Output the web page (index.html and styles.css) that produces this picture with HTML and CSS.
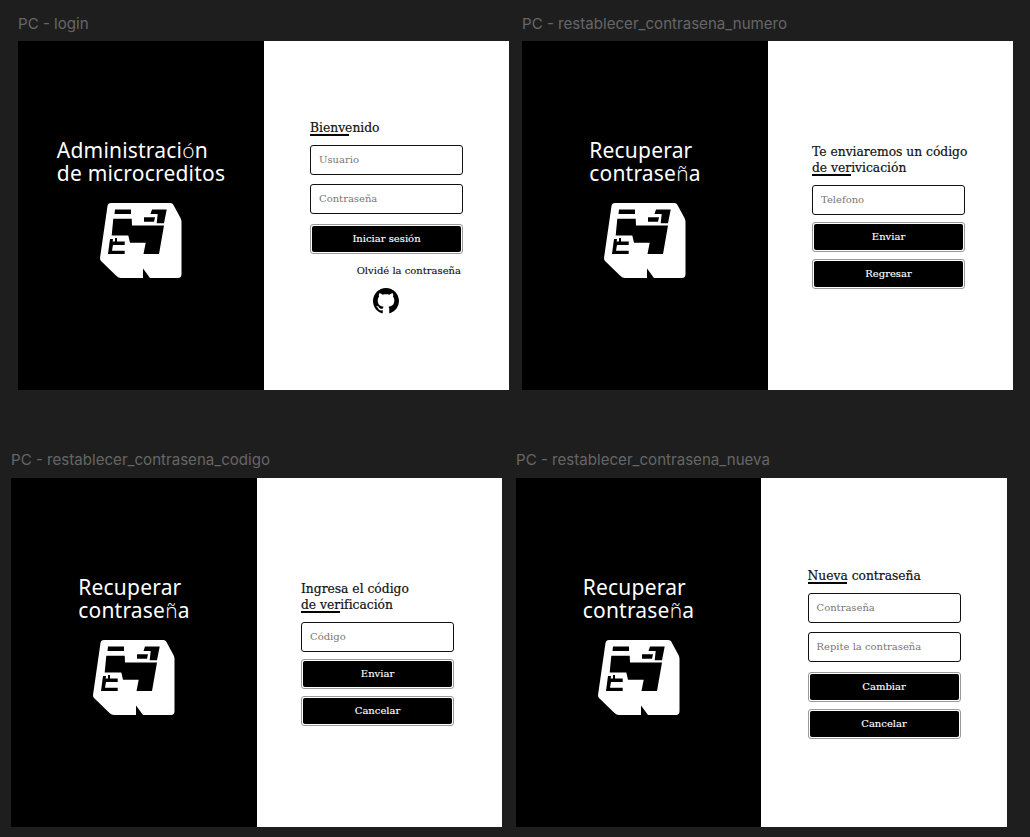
FILE: index.html
```html
<!DOCTYPE html>
<html lang="es">
<head>
<meta charset="utf-8">
<title>PC frames</title>
<link rel="stylesheet" href="styles.css">
</head>
<body>
<svg class="defs" width="0" height="0" aria-hidden="true">
  <symbol id="logo" viewBox="0 0 82 76">
    <path fill-rule="evenodd" fill="#fff" d="M11 0H70Q73 0 74 3L80.500 15Q81.500 17 81.500 19V71Q81.500 75 78 75H50L43 65.500V75H21Q18.500 75 16.500 73L1 58Q0 57 0 55L7.500 3Q8 0 11 0Z
    M15 6.500L14.500 11H31V6.500Z
    M52 6.500H66.700L64 20.300H56.700L57.700 11H50.500Z
    M44 14.300H55L54 18.700H44Z
    M13.300 15.700H31.700L32 22.500H64L59 51H43.500L45.700 39.700H30L28.300 32.500H11.700Z
    M10 36H13L12.700 38.500H15V35H17V38.500H24.700V42H13L12 47.700H24.700V51H8Z"/>
  </symbol>
</svg>

<article class="frame frame-login">
  <p class="frame-label">PC - login</p>
  <div class="board">
    <section class="brand">
      <h1 class="brand-title">Administraci<span class="alt">ó</span>n<br>de microcreditos</h1>
      <svg class="logo"><use href="#logo"/></svg>
    </section>
    <section class="panel">
      <form class="form">
        <h2 class="title"><span class="rule">Bienvenido</span></h2>
        <div class="field">Usuario</div>
        <div class="field">Contraseña</div>
        <div class="btn"><span>Iniciar sesión</span></div>
        <a class="link">Olvidé la contraseña</a>
        <svg class="github" viewBox="0 0 16 16"><path fill="#000" d="M8 0C3.58 0 0 3.58 0 8c0 3.54 2.29 6.53 5.47 7.59.4.07.55-.17.55-.38 0-.19-.01-.82-.01-1.49-2.01.37-2.53-.49-2.69-.94-.09-.23-.48-.94-.82-1.13-.28-.15-.68-.52-.01-.53.63-.01 1.08.58 1.23.82.72 1.21 1.87.87 2.33.66.07-.52.28-.87.51-1.07-1.78-.2-3.64-.89-3.64-3.95 0-.87.31-1.59.82-2.15-.08-.2-.36-1.02.08-2.12 0 0 .67-.21 2.2.82.64-.18 1.32-.27 2-.27s1.36.09 2 .27c1.53-1.04 2.2-.82 2.2-.82.44 1.1.16 1.92.08 2.12.51.56.82 1.27.82 2.15 0 3.07-1.87 3.75-3.65 3.95.29.25.54.73.54 1.48 0 1.07-.01 1.93-.01 2.2 0 .21.15.46.55.38A8.01 8.01 0 0 0 16 8c0-4.42-3.58-8-8-8z"/></svg>
      </form>
    </section>
  </div>
</article>

<article class="frame frame-numero">
  <p class="frame-label">PC - restablecer_contrasena_numero</p>
  <div class="board">
    <section class="brand">
      <h1 class="brand-title">Recuperar<br>contrase<span class="alt">ñ</span>a</h1>
      <svg class="logo"><use href="#logo"/></svg>
    </section>
    <section class="panel panel-left">
      <form class="form">
        <h2 class="title">Te enviaremos un código<br><span class="rule">de verivicación</span></h2>
        <div class="field">Telefono</div>
        <div class="btn"><span>Enviar</span></div>
        <div class="btn"><span>Regresar</span></div>
      </form>
    </section>
  </div>
</article>

<article class="frame frame-codigo">
  <p class="frame-label">PC - restablecer_contrasena_codigo</p>
  <div class="board">
    <section class="brand">
      <h1 class="brand-title">Recuperar<br>contrase<span class="alt">ñ</span>a</h1>
      <svg class="logo"><use href="#logo"/></svg>
    </section>
    <section class="panel panel-left">
      <form class="form">
        <h2 class="title">Ingresa el código<br><span class="rule">de verificación</span></h2>
        <div class="field">Código</div>
        <div class="btn"><span>Enviar</span></div>
        <div class="btn"><span>Cancelar</span></div>
      </form>
    </section>
  </div>
</article>

<article class="frame frame-nueva">
  <p class="frame-label">PC - restablecer_contrasena_nueva</p>
  <div class="board">
    <section class="brand">
      <h1 class="brand-title">Recuperar<br>contrase<span class="alt">ñ</span>a</h1>
      <svg class="logo"><use href="#logo"/></svg>
    </section>
    <section class="panel">
      <form class="form">
        <h2 class="title"><span class="rule">Nueva contraseña</span></h2>
        <div class="field">Contraseña</div>
        <div class="field">Repite la contraseña</div>
        <div class="btn"><span>Cambiar</span></div>
        <div class="btn"><span>Cancelar</span></div>
      </form>
    </section>
  </div>
</article>
</body>
</html>
```
FILE: styles.css
```css
* { box-sizing: border-box; }
html, body { margin: 0; height: 100%; }
body {
  position: relative;
  width: 1030px;
  height: 837px;
  overflow: hidden;
  background: #1e1e1e;
  font-family: "Noto Sans", sans-serif;
}
.defs { position: absolute; }

/* Frames sit at their own places on a free design canvas */
.frame { position: absolute; width: 491px; }
.frame-login { left: 18px; top: 15px; }
.frame-numero { left: 522px; top: 15px; }
.frame-codigo { left: 11px; top: 451px; }
.frame-nueva { left: 516px; top: 451px; }
.frame-codigo .frame-label, .frame-nueva .frame-label { margin-bottom: 10px; }
.frame-nueva .brand { width: 245px; }

.frame-label {
  margin: 0 0 9px;
  height: 17px;
  font: 400 15.1px/17px Inter, sans-serif;
  color: #666;
}

.board { display: flex; height: 349px; }

.brand {
  width: 246px;
  background: #000;
  display: flex;
  flex-direction: column;
  align-items: center;
  padding-top: 98px;
}
.brand-title {
  margin: 0 0 18px;
  font: 400 21px/23px "Noto Sans", sans-serif;
  color: #fff;
  letter-spacing: 0.2px;
}
.alt { font-family: "Open Sans", sans-serif; font-weight: 300; }
.logo { display: block; width: 82px; height: 76px; }

.panel {
  flex: 1;
  background: #fff;
  display: flex;
  align-items: center;
  justify-content: center;
  padding-top: 1px;
}
.panel-left { padding-right: 4px; }
.form { width: 153px; display: flex; flex-direction: column; }
.title {
  margin: 0 0 9px;
  padding-top: 1px;
  font: 400 12.3px/16px "DejaVu Serif", serif;
  color: #111;
  white-space: nowrap;
  -webkit-text-stroke: 0.2px #111;
}
.rule { position: relative; }
.rule::after {
  content: "";
  position: absolute;
  left: 0;
  top: 13px;
  width: 39px;
  height: 2px;
  background: #000;
}
.field {
  height: 30px;
  margin-bottom: 7px;
  padding: 0 8px;
  border: 1px solid #111;
  border-radius: 3px;
  font: 400 10px/28px "DejaVu Serif", serif;
  color: #777;
}
.field:has(+ .field) { margin-bottom: 9px; }
.field + .field { margin-bottom: 10px; }
.btn {
  height: 30px;
  padding: 1px;
  border: 1px solid #999;
  border-radius: 3px;
}
.btn + .btn { margin-top: 7px; }
.btn span {
  display: block;
  height: 100%;
  background: #000;
  border-radius: 2px;
  text-align: center;
  font: 400 10px/26px "DejaVu Serif", serif;
  color: #fff;
  -webkit-text-stroke: 0.15px #fff;
}
.link {
  align-self: flex-end;
  margin: 10px 2px 11px 0;
  font: 400 10px/13px "DejaVu Serif", serif;
  color: #111;
  -webkit-text-stroke: 0.15px #111;
}
.github { align-self: center; width: 26px; height: 26px; margin-right: 2px; }
```
